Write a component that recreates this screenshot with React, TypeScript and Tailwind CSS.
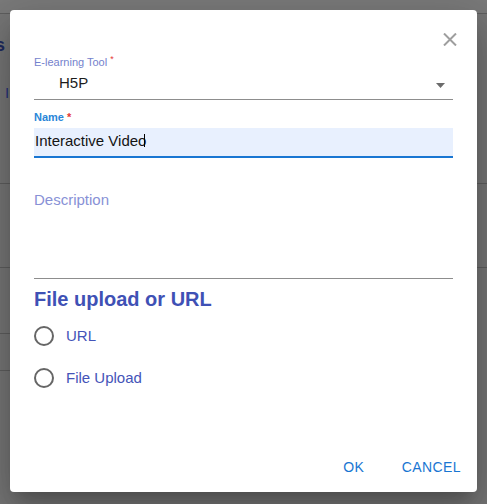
import React from "react";

export default function App() {
  return (
    <div className="relative w-[487px] h-[504px] overflow-hidden bg-[#767676] font-['Liberation_Sans',Arial,sans-serif]">
      {/* background page (dimmed) */}
      <div className="flex flex-col">
        <div className="h-[14px] bg-[#7a7a7a] border-b border-[#5e5e5e]" />
        <div className="h-[170px] border-b border-[#5e5e5e] relative">
          <div className="absolute left-[-5px] top-[20px] text-[18px] font-bold leading-[22px] text-[#1f2a5e]">s</div>
          <div className="absolute left-[5px] top-[69px] text-[15px] leading-[20px] text-[#27337a]">I</div>
        </div>
        <div className="h-[84px] border-b border-[#5e5e5e]" />
        <div className="h-[66px] w-[20px] border-b border-[#5e5e5e]" />
        <div className="h-[37px] w-[20px] border-b border-[#5e5e5e]" />
      </div>

      {/* dialog */}
      <div className="absolute left-[10px] top-[10px] w-[467px] h-[482px] bg-white rounded-[4px] shadow-[0_11px_15px_-7px_rgba(0,0,0,0.2),0_24px_38px_3px_rgba(0,0,0,0.14),0_9px_46px_8px_rgba(0,0,0,0.12)] flex flex-col">
        <button className="absolute top-[22px] right-[20px] w-[14px] h-[14px]" aria-label="close">
          <svg width="14" height="13" viewBox="0 0 14 13">
            <path d="M1 0.5L13 12.5M13 0.5L1 12.5" stroke="#9e9e9e" strokeWidth="2" />
          </svg>
        </button>

        <div className="flex flex-col px-[24px] pt-[46px]">
          {/* E-learning Tool select */}
          <div className="text-[11px] leading-[13px] text-[#7482cd]">
            E-learning Tool
            <span className="relative top-[-4px] ml-[3px] text-[9px] text-[#e53935]">*</span>
          </div>
          <div className="flex items-start h-[30px] pt-[3px] border-b border-[#8d8d8d]">
            <span className="pl-[25px] text-[15px] leading-[20px] text-[#1c1c1c]">H5P</span>
            <svg className="ml-auto mr-[8px] mt-[10px]" width="9" height="5" viewBox="0 0 9 5">
              <path d="M0 0L4.5 5L9 0Z" fill="#6b6b6b" />
            </svg>
          </div>

          {/* Name input */}
          <div className="mt-[11px] text-[11px] leading-[13px] font-bold text-[#2a86d8]">
            Name <span className="text-[#e53935]">*</span>
          </div>
          <div className="mt-[4px] flex items-start h-[30px] pt-[3px] bg-[#e8f0fe] border-b-2 border-[#1976d2]">
            <span className="pl-[1px] text-[15px] leading-[20px] text-[#141414]">Interactive Video</span>
            <span className="inline-block w-px h-[13px] mt-[3px] -ml-[2px] bg-black" />
          </div>

          {/* Description */}
          <div className="mt-[32px] h-[89px] border-b border-[#8d8d8d]">
            <div className="text-[15px] leading-[20px] text-[#8891d6]">Description</div>
          </div>

          {/* File upload or URL */}
          <div className="mt-[8px] text-[20px] leading-[24px] font-bold text-[#3f51b5]">File upload or URL</div>
          <div className="mt-[4px] flex flex-col">
            <div className="flex items-center h-[42px]">
              <span className="w-[20px] h-[20px] rounded-full border-2 border-[#666666]" />
              <span className="ml-[12px] text-[15px] leading-[20px] text-[#4454b8]">URL</span>
            </div>
            <div className="flex items-center h-[42px]">
              <span className="w-[20px] h-[20px] rounded-full border-2 border-[#666666]" />
              <span className="ml-[12px] text-[15px] leading-[20px] text-[#4454b8]">File Upload</span>
            </div>
          </div>
        </div>

        {/* actions */}
        <div className="mt-auto flex justify-end gap-2 pr-[8px] pb-[7px]">
          <button className="min-w-[64px] h-9 px-2 text-[14px] leading-[20px] tracking-[0.4px] text-[#1976d2]">OK</button>
          <button className="min-w-[64px] h-9 px-2 text-[14px] leading-[20px] tracking-[0.4px] text-[#1976d2]">CANCEL</button>
        </div>
      </div>
    </div>
  );
}
